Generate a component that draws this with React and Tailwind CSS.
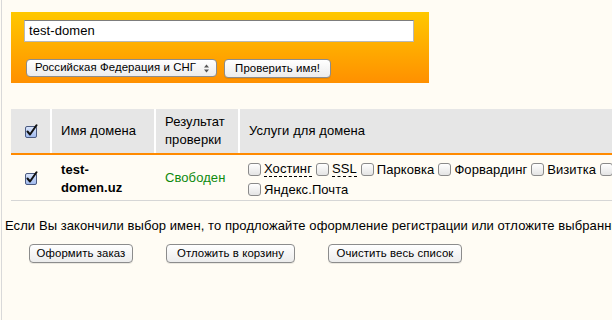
import React from "react";

// Чекбокс в стиле macOS: отмеченный — голубой с галочкой, пустой — серый скруглённый
function Check({ checked }) {
  if (checked) {
    return (
      <svg width="14" height="14" viewBox="0 0 14 14" className="shrink-0">
        <defs>
          <linearGradient id="cb" x1="0" y1="0" x2="0" y2="1">
            <stop offset="0" stopColor="#dbe6fb" />
            <stop offset="1" stopColor="#9fb9ee" />
          </linearGradient>
        </defs>
        <rect x="1.5" y="2.5" width="11" height="11" rx="1.5" fill="url(#cb)" stroke="#4b5a80" />
        <path d="M3.5 7.5 L6 10.5 L12.5 1.2" fill="none" stroke="#111" strokeWidth="2" strokeLinecap="round" strokeLinejoin="round" />
      </svg>
    );
  }
  return (
    <span className="inline-block w-[13px] h-[13px] shrink-0 rounded-[3px] border border-[#8a8a8a] bg-[linear-gradient(to_bottom,#ffffff,#e4e4e4)]" />
  );
}

function Btn({ children, className = "" }) {
  return (
    <button
      className={
        "h-[19px] rounded-[4px] border border-[#8c8c8c] bg-[linear-gradient(to_bottom,#ffffff,#ececec)] text-[11.4px] leading-[17px] text-black shadow-[0_1px_0_rgba(0,0,0,0.08)] " +
        className
      }
    >
      {children}
    </button>
  );
}

const services = [
  { name: "Хостинг", dashed: true },
  { name: "SSL", dashed: true },
  { name: "Парковка" },
  { name: "Форвардинг" },
  { name: "Визитка" },
  { name: "Сайт" },
  { name: "Яндекс.Почта" },
];

export default function App() {
  return (
    <div className="w-[612px] h-[320px] overflow-hidden bg-[#fffcf4] font-['Liberation_Sans',Arial,sans-serif] text-[13px] tracking-[0.08px] text-black">
      <div className="ml-px w-[720px] h-full border-l border-[#d9d9d9] pt-[12px]">
        {/* Оранжевый блок поиска */}
        <div className="ml-[9px] w-[418px] h-[71px] bg-[linear-gradient(to_bottom,#ffc800,#ff9000)] pt-[8px] pl-[13px]">
          <div className="w-[390px] h-[22px] bg-white border border-[#b8b8b8] border-t-[#7d7d7d] flex items-center pl-[4px] text-[13px]">
            test-domen
          </div>
          <div className="mt-[17px] ml-[2px] flex gap-[7px]">
            <div className="w-[191px] h-[18px] rounded-[4px] border border-[#8c8c8c] bg-[linear-gradient(to_bottom,#ffffff,#ececec)] flex items-center justify-between pl-[8px] pr-[6px] text-[11.4px]">
              <span>Российская Федерация и СНГ</span>
              <svg width="7" height="11" viewBox="0 0 7 11">
                <path d="M1 4.5 L3.5 1.5 L6 4.5 Z" fill="#555" />
                <path d="M1 6.5 L3.5 9.5 L6 6.5 Z" fill="#555" />
              </svg>
            </div>
            <Btn className="w-[107px] h-[18px] leading-[16px]">Проверить имя!</Btn>
          </div>
        </div>

        {/* Таблица доменов */}
        <div className="ml-[9px] mt-[26px]">
          <div className="flex h-[44px] bg-[#e6e6e6] border-b-2 border-[#ff8a00] box-content">
            <div className="w-[39px] flex items-center justify-center pl-[1px]">
              <Check checked />
            </div>
            <div className="w-[104px] border-l-2 border-white flex items-center pl-[9px]">Имя домена</div>
            <div className="w-[84px] border-l-2 border-white flex items-center pl-[9px] leading-[18px]">
              Результат
              <br />
              проверки
            </div>
            <div className="flex-1 border-l-2 border-white flex items-center pl-[9px]">Услуги для домена</div>
          </div>
          <div className="flex h-[45px] border-b border-[#d6d6d6] box-content">
            <div className="w-[39px] flex items-center justify-center pl-[1px]">
              <Check checked />
            </div>
            <div className="w-[104px] pl-[11px] pt-[6px] font-bold leading-[18px]">
              test-
              <br />
              domen.uz
            </div>
            <div className="w-[84px] pl-[11px] flex items-center text-[#0e8a0e]">Свободен</div>
            <div className="flex-1 pl-[10px] pt-[4px] flex flex-wrap gap-x-[4px] leading-[19px]">
              {services.map((s) => (
                <label key={s.name} className="inline-flex items-center gap-[3px] whitespace-nowrap">
                  <Check />
                  <span className={s.dashed ? "border-b border-dashed border-black leading-[15px]" : ""}>{s.name}</span>
                </label>
              ))}
            </div>
          </div>
        </div>

        <p className="mt-[16px] ml-[3px] whitespace-nowrap leading-[18px]">
          Если Вы закончили выбор имен, то продложайте оформление регистрации или отложите выбранные домены в корзину.
        </p>
        <div className="mt-[9px] ml-[27px] flex gap-[33px]">
          <Btn className="w-[104px]">Оформить заказ</Btn>
          <Btn className="w-[129px]">Отложить в корзину</Btn>
          <Btn className="w-[134px]">Очистить весь список</Btn>
        </div>
      </div>
    </div>
  );
}
